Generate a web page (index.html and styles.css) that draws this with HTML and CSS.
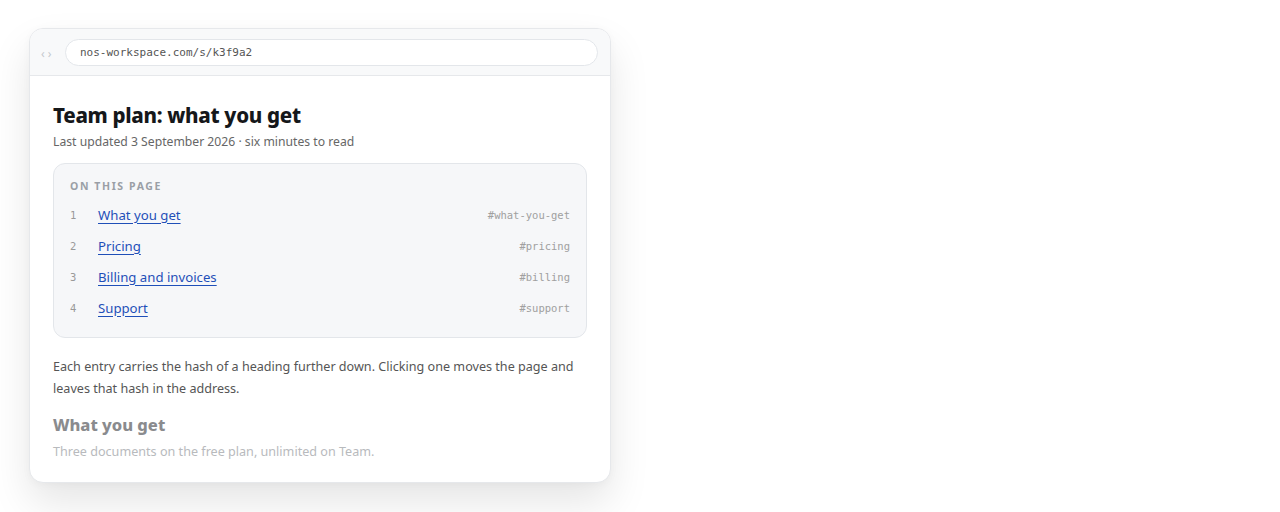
FILE: index.html
```html
<!DOCTYPE html>
<html lang="en">
<head>
    <meta charset="UTF-8">
    <meta name="viewport" content="width=device-width, initial-scale=1.0">
    <title>Team plan: what you get</title>
    <link rel="stylesheet" href="styles.css">
</head>
<body>

<div class="browser">
    <!-- address bar -->
    <div class="browser-bar">
        <span class="nav-arrows"><span>&lsaquo;</span><span>&rsaquo;</span></span>
        <div class="address">nos-workspace.com/s/k3f9a2</div>
    </div>

    <div class="page">
        <h1 class="page-title">Team plan: what you get</h1>
        <p class="page-meta">Last updated 3 September 2026 · six minutes to read</p>

        <!-- table of contents -->
        <nav class="toc">
            <div class="toc-label">ON THIS PAGE</div>
            <ol class="toc-list">
                <li class="toc-row"><span class="toc-num">1</span><a href="#what-you-get">What you get</a><code>#what-you-get</code></li>
                <li class="toc-row"><span class="toc-num">2</span><a href="#pricing">Pricing</a><code>#pricing</code></li>
                <li class="toc-row"><span class="toc-num">3</span><a href="#billing">Billing and invoices</a><code>#billing</code></li>
                <li class="toc-row"><span class="toc-num">4</span><a href="#support">Support</a><code>#support</code></li>
            </ol>
        </nav>

        <p class="intro">Each entry carries the hash of a heading further down. Clicking one moves the page and leaves that hash in the address.</p>

        <h2 class="section-title" id="what-you-get">What you get</h2>
        <p class="section-text">Three documents on the free plan, unlimited on Team.</p>
    </div>
</div>

</body>
</html>
```

FILE: styles.css
```css
html {
    height: 100%;
}
body {
    margin: 0;
    min-height: 100%;
    box-sizing: border-box;
    padding: 28px 0 0 29px;
    background-color: #fff;
    font-family: "Segoe UI", "Noto Sans", "Open Sans", sans-serif;
    color: #333;
}
.browser {
    width: 582px;
    height: 455px;
    box-sizing: border-box;
    border: 1px solid #e6e8eb;
    border-radius: 14px;
    background-color: #fff;
    overflow: hidden;
    box-shadow: 0 20px 40px rgba(0, 0, 0, 0.1), 0 2px 8px rgba(0, 0, 0, 0.03);
}
.browser-bar {
    display: flex;
    align-items: center;
    gap: 10px;
    height: 46px;
    padding: 0 12px 0 11px;
    background-color: #f8f9fa;
    border-bottom: 1px solid #e6e8eb;
}
.nav-arrows {
    display: flex;
    gap: 3px;
    width: 14px;
    color: #c4c8cd;
    font-size: 12px;
    padding-top: 2px;
}
.address {
    flex: 1;
    height: 25px;
    line-height: 25px;
    padding: 0 14px;
    background-color: #fff;
    border: 1px solid #e3e6ea;
    border-radius: 14px;
    font-family: "DejaVu Sans Mono", monospace;
    font-size: 11px;
    color: #555;
}
.page {
    padding: 22px 23px 0 23px;
}
.page-title {
    margin: 3px 0 0;
    font-size: 20.5px;
    font-weight: 800;
    color: #15171a;
    letter-spacing: -0.3px;
}
.page-meta {
    margin: 4px 0 0;
    font-size: 12.2px;
    color: #666;
}
.toc {
    margin-top: 13px;
    padding: 15px 16px 14px 16px;
    background-color: #f6f7f9;
    border: 1px solid #e3e6ea;
    border-radius: 12px;
}
.toc-label {
    font-size: 10.5px;
    font-weight: 700;
    letter-spacing: 1.6px;
    color: #9a9fa6;
}
.toc-list {
    list-style: none;
    margin: 6px 0 0;
    padding: 0;
}
.toc-row {
    display: flex;
    align-items: center;
    height: 31px;
    font-size: 13.2px;
}
.toc-num {
    width: 28px;
    font-family: "DejaVu Sans Mono", monospace;
    font-size: 10.5px;
    color: #999;
}
.toc-row a {
    color: #1f4fb8;
    text-decoration: underline;
    text-underline-offset: 3px;
}
.toc-row code {
    margin-left: auto;
    font-family: "DejaVu Sans Mono", monospace;
    font-size: 10.5px;
    color: #a0a0a0;
}
.intro {
    margin: 18px 0 0;
    font-size: 12.6px;
    line-height: 22px;
    color: #555;
}
.section-title {
    margin: 13px 0 0;
    font-size: 16.5px;
    font-weight: 800;
    color: #8a8b8e;
}
.section-text {
    margin: 7px 0 0;
    font-size: 12.6px;
    color: #b8babd;
}
```
